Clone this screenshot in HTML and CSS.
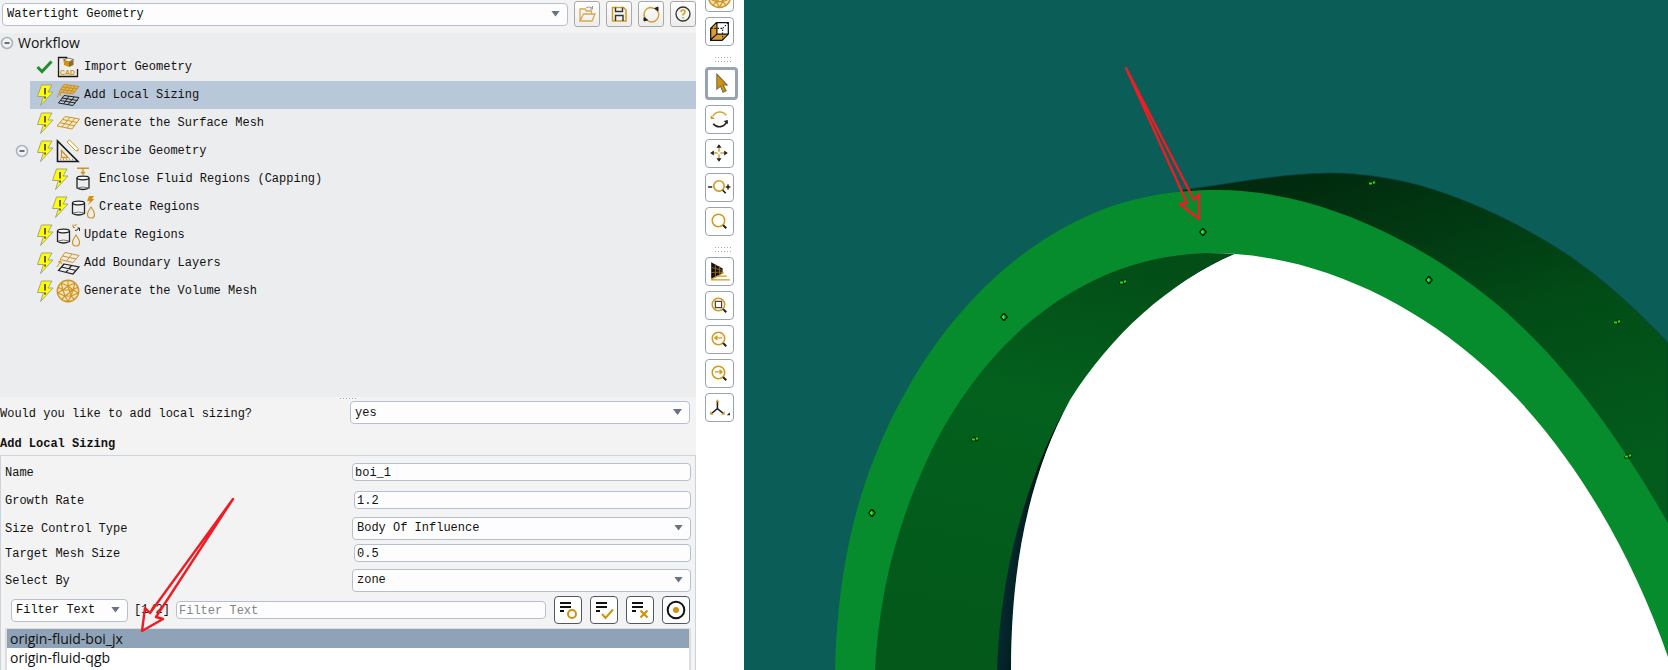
FILE: index.html
```html
<!DOCTYPE html>
<html lang="en">
<head>
<meta charset="utf-8">
<title>Watertight Geometry Workflow</title>
<link rel="stylesheet" href="styles.css">
</head>
<body>
<svg class="defs" aria-hidden="true">
  <symbol id="bolt" viewBox="0 0 18 22">
    <path d="M5.500 1H16L12 8H17L4.500 21.500L7.500 12.500H1.500Z" fill="#ffff00" stroke="#a3a38c" stroke-width="1"/>
    <path d="M9 4V10.500M9 12.500V14.500" stroke="#222" stroke-width="1.400"/>
  </symbol>
  <symbol id="check" viewBox="0 0 18 22">
    <path d="M1.500 11L6 15.500L15.500 5.500" fill="none" stroke="#1f8f2b" stroke-width="3"/>
  </symbol>
  <symbol id="minus" viewBox="0 0 14 14">
    <circle cx="7" cy="7" r="5.500" fill="#f1f2f4" stroke="#a9b2be" stroke-width="1.500"/>
    <path d="M4.500 7H9.500" stroke="#3c4550" stroke-width="1.500"/>
  </symbol>
  <symbol id="mesh" viewBox="0 0 24 24">
    <path d="M9 5.500L23.500 8L16 18L1 15ZM14 6.400L6 16M19 7.200L11 17M6.500 8.500L21 11.500M4 11.700L18.500 14.700" fill="#f6ead0" stroke="#cf9422" stroke-width="1"/>
  </symbol>
  <symbol id="sizing" viewBox="0 0 24 24">
    <path d="M8 1.500L23 3.500L17 11L3 9ZM12 2L7 9.500M15.500 2.500L10.500 10M19 3L14 10.500M6.500 4L21 6M5 6.500L19 8.500" fill="#dfb764" stroke="#c98f20" stroke-width="1"/>
    <path d="M8 12.500L23 14.500L17 22.500L2.500 20ZM13 13L7.500 21M18 14L12 21.700M6 15L21.500 17.500M4.500 17.500L19.500 20" fill="#bac3ce" stroke="#222" stroke-width="1"/>
    <path d="M1.500 14.500Q1 12 4 10.500M2 10.500H4.500V13" fill="none" stroke="#cf9422" stroke-width="1"/>
  </symbol>
  <symbol id="layers" viewBox="0 0 24 24">
    <path d="M9 1.500L23 4.500L17 11.500L4 8.500ZM16 3L10.500 10M6.500 5L20 8" fill="none" stroke="#cf9422" stroke-width="1"/>
    <path d="M8 13L23 16L17 23L2.500 19.500ZM15.500 14.500L10 21.300M5.500 16L20 19.500" fill="none" stroke="#222" stroke-width="1.200"/>
    <path d="M1 16L4.500 10.500M2 11L5 10L5.300 13" fill="none" stroke="#cf9422" stroke-width="1"/>
  </symbol>
  <symbol id="describe" viewBox="0 0 24 24">
    <path d="M1.500 2V22.500H22Z" fill="none" stroke="#1a1a1a" stroke-width="1.600"/>
    <path d="M5.500 11.500V18.500H12Z" fill="none" stroke="#cf9422" stroke-width="1.300"/>
    <path d="M4 20.500H18" stroke="#cf9422" stroke-width="1.300" stroke-dasharray="1 2"/>
    <path d="M11 3L13.500 1L22 9.500V12L19.500 11.500Z" fill="#fff" stroke="#cf9422" stroke-width="1"/>
  </symbol>
  <symbol id="capping" viewBox="0 0 24 24">
    <path d="M6 1.200H18M12 1.500V6.500M10 5L12 7L14 5" fill="none" stroke="#cf9422" stroke-width="1.400"/>
    <ellipse cx="12" cy="11" rx="6" ry="1.800" fill="#f8f8f8" stroke="#222" stroke-width="1.300"/>
    <path d="M6 11V21Q12 24 18 21V11" fill="none" stroke="#222" stroke-width="1.300"/>
    <path d="M6 21Q12 19 18 21" fill="none" stroke="#777" stroke-width="1"/>
  </symbol>
  <symbol id="can-drop" viewBox="0 0 24 24">
    <ellipse cx="7.500" cy="8" rx="6" ry="1.800" fill="#f8f8f8" stroke="#222" stroke-width="1.300"/>
    <path d="M1.500 8V18.500Q7.500 21.500 13.500 18.500V8" fill="none" stroke="#222" stroke-width="1.300"/>
    <path d="M2 18Q7.500 16 13 18" fill="none" stroke="#777" stroke-width="1"/>
    <path d="M20 12Q16.500 17 16.500 19.500A3.500 3.500 0 0 0 23.500 19.500Q23.500 17 20 12Z" fill="none" stroke="#cf9422" stroke-width="1.200"/>
  </symbol>
  <symbol id="create" viewBox="0 0 24 24">
    <use href="#can-drop" width="24" height="24"/>
    <path d="M18 1H23L21 4H23.500L17 10L19 6H16Z" fill="#d1930b"/>
  </symbol>
  <symbol id="update" viewBox="0 0 24 24">
    <use href="#can-drop" width="24" height="24"/>
    <path d="M17 4Q18 1.500 21 1.800M17 1.500V4.500H19" fill="none" stroke="#cf9422" stroke-width="1"/><path d="M23 5Q22 7.500 19 7.500M23.500 8V5H21.500" fill="none" stroke="#333" stroke-width="1"/>
  </symbol>
  <symbol id="ball" viewBox="0 0 24 24">
    <circle cx="12" cy="12" r="10.700" fill="#f4e3bd" stroke="#cf9422" stroke-width="1.400"/>
    <path d="M12 7L17 11L15 17H9L7 11ZM12 7V1.500M17 11L22 8M15 17L18.500 20.500M9 17L5.500 20.500M7 11L2 8M5 4L12 7L19 4M22 8L17 11L22.500 14L15 17L12 22.500L9 17L1.500 14L7 11L5 4M19 4L17 11M7 11H17L9 17M12 7L15 17" fill="none" stroke="#cf9422" stroke-width="1.100"/>
  </symbol>
  <symbol id="lens" viewBox="0 0 26 26">
    <circle cx="12" cy="12" r="6" fill="none" stroke="#d19a1c" stroke-width="1.500"/>
    <path d="M16.500 16.500L19.500 19.500" stroke="#222" stroke-width="2"/>
  </symbol>
  <symbol id="lines" viewBox="0 0 26 26">
    <path d="M5 6H16M5 10H16M5 14H9" stroke="#111" stroke-width="2"/>
  </symbol>
</svg>

<main class="app">
  <section class="panel">
    <div class="topbar">
      <span class="select"><select aria-label="Workflow type"><option>Watertight Geometry</option></select></span>
      <button class="tool" aria-label="Open"><svg viewBox="0 0 24 24"><path d="M5 19V7H10L11.500 9H16.500V12M5 19L8.500 12H20L17 19Z" fill="none" stroke="#d8a84a" stroke-width="1.300"/><path d="M11 6Q13 4 17 6M15 7H17.500V4" fill="none" stroke="#999" stroke-width="1"/></svg></button>
      <button class="tool" aria-label="Save"><svg viewBox="0 0 24 24"><path d="M5.500 5.500H16.500L19 8V19H5.500Z" fill="none" stroke="#d19a1c" stroke-width="1.500"/><path d="M8.500 5.500V9.500H15.500V5.500M8.500 19V13.500H16V19" fill="none" stroke="#333" stroke-width="1.400"/></svg></button>
      <button class="tool" aria-label="Reset"><svg viewBox="0 0 24 24"><path d="M6 16A7 7 0 0 1 12 5.500M9 18.800A7 7 0 0 0 18.500 9M12 5.500L15 6.500M6 16L9 18.800" fill="none" stroke="#d8a135" stroke-width="1.400"/><path d="M15.500 6.500L19 5V9ZM5 19V15.500L8.500 18Z" fill="#222" stroke="#222"/></svg></button>
      <button class="tool" aria-label="Help"><svg viewBox="0 0 24 24"><circle cx="12" cy="12" r="7" fill="none" stroke="#333" stroke-width="1.300"/><path d="M10 10Q10 8 12 8T14 10Q14 11 12 12.500V13.500M12 15V16.500" fill="none" stroke="#d19a1c" stroke-width="1.500"/></svg></button>
    </div>

    <div class="tree">
      <div class="root"><svg class="expander"><use href="#minus"/></svg>Workflow</div>
      <ul class="nodes">
        <li class="node"><span class="item"><svg class="status"><use href="#check"/></svg><svg class="glyph" viewBox="0 0 24 24">
          <path d="M11 2.500H2.500V21.500H21.500V14M11 2.500V4" fill="none" stroke="#1a1a1a" stroke-width="1.300"/>
          <path d="M7.500 5L12 3L17.500 4.500L13 7Z" fill="#fff" stroke="#6d5010" stroke-width=".8"/>
          <path d="M7.500 5L13 7V12L8 10Z" fill="#d1930b"/><path d="M13 7L17.500 5V10L13 12Z" fill="#8b6a2b"/>
          <text x="4" y="20" class="cad-text">CAD</text>
        </svg>Import Geometry</span></li>
        <li class="node"><span class="item item-selected"><svg class="status"><use href="#bolt"/></svg><svg class="glyph"><use href="#sizing"/></svg>Add Local Sizing</span></li>
        <li class="node"><span class="item"><svg class="status"><use href="#bolt"/></svg><svg class="glyph"><use href="#mesh"/></svg>Generate the Surface Mesh</span></li>
        <li class="node"><svg class="expander"><use href="#minus"/></svg><span class="item"><svg class="status"><use href="#bolt"/></svg><svg class="glyph"><use href="#describe"/></svg>Describe Geometry</span></li>
        <li class="node"><span class="item item-child"><svg class="status"><use href="#bolt"/></svg><svg class="glyph"><use href="#capping"/></svg>Enclose Fluid Regions (Capping)</span></li>
        <li class="node"><span class="item item-child"><svg class="status"><use href="#bolt"/></svg><svg class="glyph"><use href="#create"/></svg>Create Regions</span></li>
        <li class="node"><span class="item"><svg class="status"><use href="#bolt"/></svg><svg class="glyph"><use href="#update"/></svg>Update Regions</span></li>
        <li class="node"><span class="item"><svg class="status"><use href="#bolt"/></svg><svg class="glyph"><use href="#layers"/></svg>Add Boundary Layers</span></li>
        <li class="node"><span class="item"><svg class="status"><use href="#bolt"/></svg><svg class="glyph"><use href="#ball"/></svg>Generate the Volume Mesh</span></li>
      </ul>
    </div>

    <div class="task">
      <div class="splitter"><span class="splitter-dots"></span></div>
      <div class="question">
        <label for="ask">Would you like to add local sizing?</label>
        <span class="select"><select id="ask"><option>yes</option></select></span>
      </div>
      <h2 class="heading">Add Local Sizing</h2>
      <div class="group">
        <div class="field"><label for="name">Name</label><input class="text" id="name" value="boi_1"></div>
        <div class="field"><label for="growth">Growth Rate</label><input class="text text-number" id="growth" value="1.2"></div>
        <div class="field"><label for="control">Size Control Type</label><span class="select"><select id="control"><option>Body Of Influence</option></select></span></div>
        <div class="field field-tight"><label for="target">Target Mesh Size</label><input class="text text-number" id="target" value="0.5"></div>
        <div class="field field-loose"><label for="by">Select By</label><span class="select"><select id="by"><option>zone</option></select></span></div>
        <div class="filter">
          <div class="filter-query">
            <span class="select select-filter"><select aria-label="Filter mode"><option>Filter Text</option></select></span>
            <span class="count">[1/2]</span>
            <input class="text filter-text" aria-label="Filter text" placeholder="Filter Text">
          </div>
          <button class="pick" aria-label="List matching"><svg viewBox="0 0 26 26"><use href="#lines"/><circle cx="17" cy="17" r="4" fill="none" stroke="#cf9310" stroke-width="2"/></svg></button>
          <button class="pick" aria-label="Select all"><svg viewBox="0 0 26 26"><use href="#lines"/><path d="M11 17L14.500 21L22 12.500" fill="none" stroke="#cf9310" stroke-width="2"/></svg></button>
          <button class="pick" aria-label="Clear selection"><svg viewBox="0 0 26 26"><use href="#lines"/><path d="M13.500 13.500L20.500 20.500M20.500 13.500L13.500 20.500" stroke="#cf9310" stroke-width="2.200"/></svg></button>
          <button class="pick" aria-label="Highlight"><svg viewBox="0 0 26 26"><circle cx="13" cy="13" r="8.300" fill="none" stroke="#111" stroke-width="2"/><circle cx="13" cy="13" r="3" fill="#cf9310"/></svg></button>
        </div>
        <ul class="zones" role="listbox" aria-label="Zones">
          <li class="zone zone-selected" role="option" aria-selected="true">origin-fluid-boi_jx</li>
          <li class="zone" role="option" aria-selected="false">origin-fluid-qgb</li>
        </ul>
        <svg class="pointer" viewBox="0 0 100 140" aria-hidden="true"><path d="M93 3L10 117L5 112L2 135L23 123L16 121Z"/></svg>
      </div>
    </div>
  </section>

  <nav class="toolbar" aria-label="View tools">
    <button class="view" aria-label="Mesh display"><svg viewBox="0 0 26 26"><use href="#ball" x="1" y="0" width="24" height="24"/></svg></button>
    <button class="view" aria-label="Bounding box"><svg viewBox="0 0 26 26"><path d="M4.500 10L10.500 4.500V15.500L4.500 21Z" fill="#dc9f22"/><path d="M4.500 21L10.500 15.500H21.500L15.500 21.500Z" fill="#dc9f22"/><path d="M4.500 10L10 4.500H21.500V15.500L15.500 21.500H4.500ZM10.500 4.500V15.500H21.500M10.500 15.500L4.500 21" fill="none" stroke="#111" stroke-width="1.200"/><path d="M5 10H16V21M16 10L21 5" fill="none" stroke="#111" stroke-width="1" stroke-dasharray="1.500 1.500"/></svg></button>
    <span class="grip"></span>
    <button class="view view-active" aria-label="Select"><svg viewBox="0 0 26 26"><path d="M8.500 4V18.500L12 15.500L14.500 21.500L17.500 20L14.500 14.500H18.500Z" fill="#d1930b" stroke="#7d6943" stroke-width="1"/></svg></button>
    <button class="view" aria-label="Rotate"><svg viewBox="0 0 26 26"><path d="M6.500 10A7.500 7.500 0 0 1 19.500 9" fill="none" stroke="#d8a135" stroke-width="1.500"/><path d="M4.500 9V12.500H8.500Z" fill="#d19a1c"/><path d="M20 15A7.500 7.500 0 0 1 7 17" fill="none" stroke="#222" stroke-width="1.500"/><path d="M17 14.500L21 13.500V17.500Z" fill="#222"/></svg></button>
    <button class="view" aria-label="Pan"><svg viewBox="0 0 26 26"><path d="M12.500 7V18M7 12.500H18" stroke="#d8a135" stroke-width="1.500"/><path d="M12.500 4L15 7.500H10ZM12.500 21L15 17.500H10ZM4 12.500L7.500 10V15ZM21 12.500L17.500 10V15Z" fill="#222"/><circle cx="12.500" cy="12.500" r="1.500" fill="#fff"/></svg></button>
    <button class="view" aria-label="Zoom in or out"><svg viewBox="0 0 26 26"><circle cx="12.500" cy="11.500" r="5" fill="none" stroke="#d19a1c" stroke-width="1.600"/><path d="M2 12.500H6M19 12.500H23.500M21.200 10V15M16 15.500L19 18.500" stroke="#222" stroke-width="1.500"/></svg></button>
    <button class="view" aria-label="Zoom to area"><svg viewBox="0 0 26 26"><use href="#lens"/></svg></button>
    <span class="grip"></span>
    <button class="view" aria-label="Perspective"><svg viewBox="0 0 26 26"><path d="M5 4L16 10V15L5 20Z" fill="#111"/><path d="M5 9L16 12M5 14L16 13.500M9 6V19M13 8V17" stroke="#a57413" stroke-width=".8"/><path d="M5 20.500L11 17.500H20M14 14.500H17M5 21H23" fill="none" stroke="#d19a1c" stroke-width="1.200"/></svg></button>
    <button class="view" aria-label="Fit to window"><svg viewBox="0 0 26 26"><use href="#lens"/><path d="M9 9H15V15H9Z" fill="none" stroke="#444" stroke-width="1.200"/></svg></button>
    <button class="view" aria-label="Previous view"><svg viewBox="0 0 26 26"><use href="#lens"/><path d="M15.500 11.500H9M11 9.500L8.500 11.500L11 13.500" fill="none" stroke="#d19a1c" stroke-width="1.300"/></svg></button>
    <button class="view" aria-label="Next view"><svg viewBox="0 0 26 26"><use href="#lens"/><path d="M8.500 11.500H15M13 9.500L15.500 11.500L13 13.500" fill="none" stroke="#d19a1c" stroke-width="1.300"/></svg></button>
    <button class="view" aria-label="Axis orientation"><svg viewBox="0 0 26 26"><path d="M11 7V14L5 19M11 14L17 19" fill="none" stroke="#222" stroke-width="1.500"/><path d="M9 8L11 5L13 8ZM4 16.500V20H7.500ZM18 16.500V20H14.500Z" fill="#d19a1c"/><path d="M23 17.500V20.500H20Z" fill="#222"/></svg></button>
  </nav>

  <section class="viewport" aria-label="Geometry view">
    <svg class="scene" viewBox="0 0 924 670" preserveAspectRatio="xMinYMin slice">
      <defs>
        <linearGradient id="outer" gradientUnits="userSpaceOnUse" x1="580" y1="170" x2="680" y2="520"><stop offset="0" stop-color="#012a0e"/><stop offset=".55" stop-color="#024d17"/><stop offset="1" stop-color="#035b1c"/></linearGradient>
        <linearGradient id="inner" gradientUnits="userSpaceOnUse" x1="340" y1="250" x2="250" y2="670"><stop offset="0" stop-color="#034d17"/><stop offset=".35" stop-color="#03601d"/><stop offset="1" stop-color="#03581a"/></linearGradient>
        <linearGradient id="rim" gradientUnits="userSpaceOnUse" x1="254" y1="600" x2="290" y2="604"><stop offset="0" stop-color="#052c34"/><stop offset=".3" stop-color="#04252a"/><stop offset="1" stop-color="#01100f"/></linearGradient>
        <g id="node"><path d="M-4 0L-1 -4H1L4 0L1 4H-1Z" fill="#012906"/><path d="M-2 0L0 -2V2ZM0 0H2" fill="#08ff12" stroke="#08ff12" stroke-width="1"/></g>
        <g id="node-side"><path d="M-4 1L-1 -3L1 -1L3 -3L4 1L1 3L-1 2L-3 3Z" fill="#012906"/><path d="M-3 .5H0M1 0L3 -1" stroke="#0be818" stroke-width="2"/></g>
      </defs>
      <rect width="924" height="670" fill="#0b5d57"/>
      <path fill="url(#outer)" stroke="#064047" stroke-width=".7" d="M437 190C480 185 530 174 584 173C620 173 657 179 691 190C737 205 783 228 824 255C861 280 894 311 924 343V540L474 240Z"/>
      <path fill="#068c2d" d="M91 670C93 591 105 513 139 437C181 343 246 262 339 218C383 197 428 190 474 190C569 190 669 237 744 297C819 357 876 439 924 523V670Z"/>
      <path fill="#fff" d="M267 670L300 440L463 253C563 252 663 297 741 367C825 442 887 551 924 657V670Z"/>
      <path fill="url(#inner)" d="M131 670C135 598 150 532 183 460C236 346 333 257 463 253Q477 253 491 254C425 282 366 336 326 400C287 472 267 560 267 670Z"/>
      <path fill="url(#rim)" d="M253 670C257 555 290 462 326 400C287 472 267 560 267 670Z"/>
      <path fill="#fff" d="M267 670C267 560 287 472 326 400C366 336 425 282 491 254V670Z"/>
      <use href="#node" x="459" y="232"/><use href="#node" x="260" y="317"/><use href="#node" x="128" y="513"/><use href="#node" x="685" y="280"/>
      <use href="#node-side" x="379" y="282"/><use href="#node-side" x="231" y="439"/><use href="#node-side" x="628" y="183"/><use href="#node-side" x="873" y="322"/><use href="#node-side" x="884" y="456"/>
      <path class="callout" d="M382 68L443 203L436 204L455 219L455 194L450 200Z"/>
    </svg>
  </section>
</main>
</body>
</html>
```
FILE: styles.css
```css
* { box-sizing: border-box; }

body {
  margin: 0;
  background: #fff;
  color: #111;
  font: 12px/16px "Liberation Mono", monospace;
}

button, input, select { margin: 0; font: inherit; color: inherit; }
ul { margin: 0; padding: 0; list-style: none; }
svg { display: block; flex: none; }
.defs { position: absolute; width: 0; height: 0; }
.cad-text { font: bold 7px "Liberation Sans", sans-serif; fill: #d1930b; }

.app {
  display: grid;
  grid-template-columns: minmax(0, 696fr) 48px minmax(0, 924fr);
  height: 100vh;
  overflow: hidden;
}

/* Workflow panel */
.panel { display: flex; flex-direction: column; min-height: 0; background: #f3f3f3; }

.topbar { display: flex; align-items: center; gap: 6px; height: 33px; padding: 0 0 5px 2px; }
.topbar .select { flex: 1; }

.tool {
  width: 26px;
  height: 26px;
  padding: 0;
  border: 1px solid #a9a9a9;
  border-radius: 3px;
  background: linear-gradient(#fff, #ececec);
}
.tool svg { width: 24px; height: 24px; }

.select { position: relative; display: block; }
.select select {
  display: block;
  width: 100%;
  height: 23px;
  padding: 0 20px 0 4px;
  border: 1px solid #b4c0d0;
  border-radius: 4px;
  background: #fdfdfd;
  line-height: 20px;
  appearance: none;
}
.select::after {
  content: "";
  position: absolute;
  top: 8px;
  right: 8px;
  width: 9px;
  height: 6px;
  background: #667482;
  clip-path: polygon(0 0, 100% 0, 50% 100%);
  pointer-events: none;
}

.tree { flex: 1; min-height: 0; background: #ecedef; }
.root {
  display: flex;
  align-items: center;
  gap: 4px;
  height: 20px;
  font: 14px/20px "Open Sans", sans-serif;
}
.expander { width: 14px; height: 14px; }
.node { display: flex; align-items: center; justify-content: flex-end; height: 28px; }
.node .expander { margin: 0 1px 0 15px; }
.item { display: flex; align-items: center; height: 28px; padding-left: 6px; }
.node .item { flex: 0 0 calc(100% - 30px); }
.item-child { padding-left: 21px; }
.item-selected { background: #b9c8d9; }
.status { width: 18px; height: 22px; margin-right: 2px; }
.glyph { width: 24px; height: 24px; margin-right: 4px; }

.splitter { display: flex; justify-content: center; height: 4px; padding-top: 1px; }
.splitter-dots { width: 17px; height: 1px; background: repeating-linear-gradient(90deg, #aaa 0 1px, transparent 1px 3px); }

.question {
  display: grid;
  grid-template-columns: minmax(0, 350fr) minmax(0, 340fr);
  align-items: center;
  padding-right: 6px;
}
.question label, .field label { padding-top: 2px; }
.heading { margin: 0; padding: 12px 0 3px; font-size: 12px; line-height: 16px; }

.group { position: relative; padding-top: 2px; border: 1px solid #cdd3de; border-bottom: 0; }
.field {
  display: grid;
  grid-template-columns: minmax(0, 347fr) minmax(0, 339fr);
  align-items: center;
  height: 28px;
  padding: 0 4px;
}
.field-tight { height: 22px; }
.field-loose { height: 32px; }

.text {
  height: 18px;
  min-width: 0;
  padding: 1px 2px 0;
  border: 1px solid #b4c0d0;
  border-radius: 4px;
  background: #fdfdfd;
}
.text::placeholder { color: #858585; opacity: 1; }
.text-number { margin-left: 2px; }

.filter { display: flex; align-items: center; gap: 8px; padding: 0 5px 4px 10px; }
.filter-query { display: flex; flex: 1; align-items: center; gap: 6px; min-width: 0; }
.select-filter { flex: none; width: 117px; }
.count { flex: none; }
.filter-text { flex: 1; }
.pick { flex: none; width: 28px; height: 28px; padding: 0; border: 1px solid #4d596b; border-radius: 4px; background: #fff; }
.pick svg { width: 26px; height: 26px; }

.zones { min-height: 42px; margin: 0 4px; border: 2px solid #dcdedd; border-top-width: 1px; border-bottom: 0; background: #fff; }
.zone { padding: 0 3px; font: 14px/19px "Open Sans", sans-serif; }
.zone-selected { background: #8fa3b8; }

.pointer { position: absolute; left: 139px; top: 40px; width: 100px; height: 140px; pointer-events: none; }
.pointer path, .callout { fill: none; stroke: #ee1c25; stroke-width: 2.4; stroke-linejoin: round; }

/* View toolbar */
.toolbar { display: flex; flex-direction: column; gap: 5px; margin-top: -17px; padding-left: 9px; }
.view { flex: none; width: 29px; height: 29px; padding: 0; border: 1px solid #97a3af; border-radius: 4px; background: #fff; }
.view svg { width: 27px; height: 27px; }
.view-active { width: 33px; height: 33px; border-width: 3px; }
.grip {
  flex: none;
  width: 17px;
  height: 5px;
  margin: 6px 0 0 10px;
  background: repeating-linear-gradient(90deg, transparent 0 1px, #fff 1px 3px), repeating-linear-gradient(#aaa 0 1px, transparent 1px 4px);
}

.viewport { min-width: 0; overflow: hidden; background: #0b5d57; }
.scene { width: 100%; height: 100%; }
```
